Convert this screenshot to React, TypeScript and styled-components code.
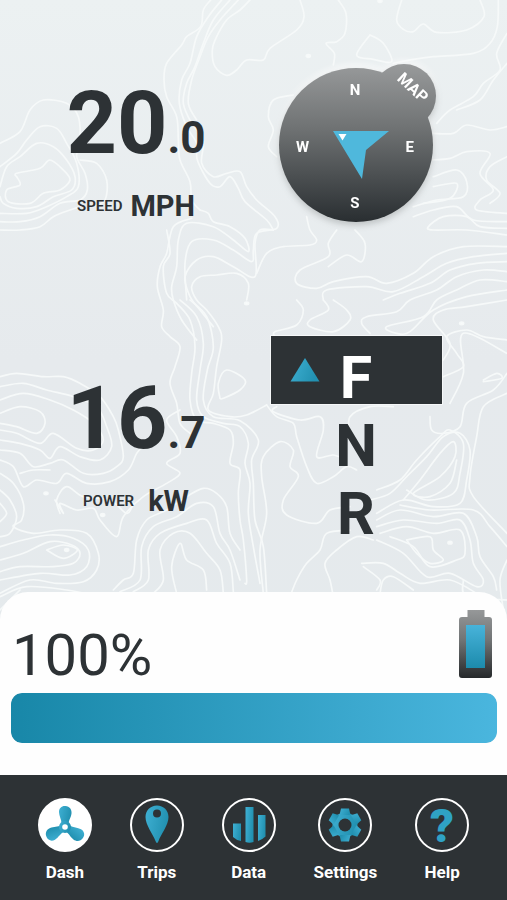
import React from "react";
import styled, { createGlobalStyle } from "styled-components";

const ink = "#2d3235";
const white = "#ffffff";

const GlobalStyle = createGlobalStyle`
  *, *::before, *::after { box-sizing: border-box; }
  body {
    margin: 0;
    background: ${ink};
    font-family: Roboto, "Liberation Sans", sans-serif;
    color: ${ink};
  }
`;

const Page = styled.div`
  position: relative;
  isolation: isolate;
  display: flex;
  flex-direction: column;
  min-height: 100vh;
  background: linear-gradient(#ecf1f2 0, #e6eaed 40%, #e4eaec 100%);
`;

const Terrain = styled.svg`
  position: absolute;
  inset: 0;
  width: 100%;
  height: 100%;
  z-index: -1;
  fill: none;
  stroke: #f6f9f9;
  stroke-width: 5;
  stroke-linejoin: round;
  stroke-linecap: round;
`;

const Main = styled.main`
  flex: 1;
  display: grid;
  grid-template-columns: 1fr 1fr;
  padding: 0 41px 51px 26px;
`;

const Readings = styled.section`
  display: flex;
  flex-direction: column;
  align-items: center;
  gap: 152px;
  padding-top: 79px;
`;

const Controls = styled.section`
  display: flex;
  flex-direction: column;
  align-items: center;
  gap: 114px;
  padding-top: 68px;
`;

const Metric = styled.div`
  display: flex;
  flex-direction: column;
  align-items: center;
  gap: 23px;
`;

const MetricValue = styled.div`
  font-size: 88px;
  line-height: 88px;
  font-weight: 700;
  white-space: nowrap;
`;

const Decimal = styled.span`
  font-size: 44px;
  line-height: 44px;
`;

const MetricCaption = styled.div<{ $gap: number }>`
  display: flex;
  align-items: center;
  gap: ${(p) => p.$gap}px;
`;

const MetricName = styled.span`
  font-size: 15px;
  line-height: 16px;
  font-weight: 600;
  text-transform: uppercase;
`;

const MetricUnit = styled.span`
  font-size: 29px;
  line-height: 32px;
  font-weight: 700;
`;

const Compass = styled.div`
  position: relative;
  width: 154px;
  height: 154px;
  color: ${white};
  filter: drop-shadow(0 3px 3px rgba(45, 50, 53, 0.25)) drop-shadow(0 -3px 3px rgba(255, 255, 255, 0.8));
`;

const CompassFace = styled.svg`
  display: block;
  width: 100%;
  height: 100%;
  overflow: visible;
`;

const Bearings = styled.div`
  position: absolute;
  inset: 13px 19px 10px 17px;
  display: grid;
  grid-template: "w n e" 1fr "w s e" 1fr / 1fr 1fr 1fr;
  font-size: 15px;
  line-height: 18px;
  font-weight: 700;
`;

const Bearing = styled.span<{ $area: "n" | "e" | "s" | "w" }>`
  grid-area: ${(p) => p.$area};
  align-self: ${(p) => ({ n: "start", s: "end", e: "center", w: "center" })[p.$area]};
  justify-self: ${(p) => ({ n: "center", s: "center", e: "end", w: "start" })[p.$area]};
`;

const MapButton = styled.button`
  position: absolute;
  top: -4px;
  right: -4px;
  width: 64px;
  height: 64px;
  padding: 0 0 22px;
  border: 0;
  border-radius: 50%;
  background: none;
  color: ${white};
  font: 700 16px/18px Roboto, "Liberation Sans", sans-serif;
  transform: rotate(43deg);
  cursor: pointer;
`;

const GearSelector = styled.fieldset`
  width: 171px;
  margin: 0;
  padding: 0;
  border: 0;
`;

const GearOption = styled.label<{ $active: boolean }>`
  display: grid;
  grid-template-columns: 1fr auto 1fr;
  height: 68px;
  padding-top: 16px;
  font-size: 59px;
  line-height: 52px;
  font-weight: 700;
  color: ${(p) => (p.$active ? white : ink)};
  background: ${(p) => (p.$active ? ink : "transparent")};
  box-shadow: ${(p) => (p.$active ? "0 0 0 1px rgba(255, 255, 255, 0.6)" : "none")};
  cursor: pointer;
`;

const GearMarker = styled.svg`
  width: 30px;
  height: 25px;
  margin-top: 5px;
  justify-self: center;
`;

const GearLetter = styled.span`
  grid-column: 2;
`;

const HiddenRadio = styled.input`
  position: absolute;
  opacity: 0;
  pointer-events: none;
`;

const BatteryPanel = styled.section`
  padding: 18px 10px 32px 11px;
  border-radius: 28px 28px 0 0;
  background: #fefefe;
`;

const BatteryHeader = styled.div`
  display: flex;
  justify-content: space-between;
  align-items: flex-start;
  padding: 0 5px 0 1px;
`;

const BatteryPercent = styled.div`
  padding-top: 11px;
  font-size: 58px;
  line-height: 69px;
`;

const BatteryIcon = styled.svg`
  width: 33px;
  height: 68px;
`;

const BarTrack = styled.div`
  height: 50px;
  margin-top: 3px;
  border-radius: 11px;
  background: #e6eaed;
  overflow: hidden;
`;

const BarFill = styled.div`
  height: 100%;
  border-radius: 11px;
  background: linear-gradient(90deg, #1887a8, #4ab6de);
`;

const Nav = styled.nav`
  display: flex;
  justify-content: space-evenly;
  height: 125px;
  padding-top: 23px;
  background: ${ink};
`;

const NavLink = styled.a`
  display: flex;
  flex-direction: column;
  align-items: center;
  gap: 9px;
  min-width: 54px;
  color: ${white};
  text-decoration: none;
  font-size: 17px;
  line-height: 22px;
  font-weight: 700;
`;

const NavBadge = styled.span<{ $active: boolean }>`
  display: block;
  width: 54px;
  height: 54px;
  border: 2px solid ${white};
  border-radius: 50%;
  background: ${(p) => (p.$active ? white : "transparent")};
`;

const NavIcon = styled.svg`
  display: block;
  width: 50px;
  height: 50px;
  overflow: visible;
  font: 900 47px Roboto, "Liberation Sans", sans-serif;
`;

const contours: string[] = [
  // ridge down the upper middle
  "632,0 610,30 602,80 560,110 545,135 500,190 492,240 500,290 530,350 535,420 540,480 570,545 575,600 600,630",
  "665,0 625,50 590,110 570,190 545,240 538,310 560,380 590,430 592,480 630,550 660,560 690,530 715,565 735,605 800,660 820,690",
  "690,0 640,60 610,130 585,200 560,250 550,310 575,370 610,420 605,490 640,530 680,520 720,515 740,560 770,600 825,650 830,685 770,700 760,750 755,785 700,750 640,720 575,725 555,790 560,900",
  "715,0 660,60 625,110 600,170 575,240 565,310 590,360",
  "750,0 720,30 680,60 650,110 637,150 645,200 680,226 710,210 740,180 790,180 810,145 890,90 912,50 900,0",
  "600,630 625,640 640,665 690,680 735,715 745,755 700,720 640,680 560,670 535,720 530,800 515,860 520,900 545,960 590,1020",
  "575,655 520,680 500,760 480,800 472,860 490,930 485,980 510,1010 540,1040 525,1100 510,1150 530,1210 540,1270 570,1300",
  "820,690 780,690 765,730 765,830 700,800 640,770 590,780 555,830 570,890 600,930 640,980",
  "740,900 745,850 710,820 650,825 600,830 575,860 590,900 620,930 655,980 665,1020 650,1100 640,1180 625,1230 690,1250 740,1245 800,1215",
  "500,690 510,760 490,800 500,880 530,910 570,960 585,1040 575,1120 570,1200 590,1260 640,1270 690,1290 700,1330 690,1390 720,1410 715,1480 720,1560 730,1620 740,1740 735,1750",
  "540,900 590,950 610,1030 600,1110 590,1200 610,1250 670,1270 720,1280 745,1330 735,1390 750,1450 745,1540 760,1640 780,1750",
  "570,900 620,950 640,1040 622,1110 610,1200 640,1250 720,1262 775,1320 755,1380 760,1450 765,1560 790,1640 800,1780",
  // top right
  "1015,0 1038,40 1035,100 1010,125 978,130 1003,160 1000,195",
  "1205,0 1190,60 1210,88 1240,95 1270,72 1310,97 1400,90 1452,50 1440,0",
  "1495,0 1492,80 1470,130 1420,160 1300,170 1240,178 1180,190",
  "1521,100 1490,160 1500,210 1450,250 1420,290 1350,330 1310,370",
  "1521,190 1480,240 1440,300 1370,330",
  "1110,105 1070,165 1120,178 1175,185 1150,130 1110,105",
  "880,285 820,300 805,350 820,390 805,440 830,470",
  "1300,400 1360,400 1400,375 1470,390 1521,380",
  "1290,480 1350,475 1400,455 1470,460 1440,520 1480,570 1440,600 1430,630 1521,640",
  "1300,530 1370,510 1400,545 1390,590 1310,600 1240,620",
  "1521,470 1470,500 1460,540 1500,580 1470,610",
  "1240,650 1300,630 1370,620 1420,660 1521,665",
  "1270,610 1350,595 1370,550 1300,560",
  "1521,685 1440,680 1400,650 1330,650 1285,680 1300,690 1400,690 1521,705",
  // below the compass
  "920,650 930,690 950,720 930,735 850,740 800,760 770,820",
  "1010,690 985,730 985,770 900,810 890,850 950,865 1000,845 1100,830 1160,850 1240,820 1300,770 1390,740 1521,740",
  "1065,690 1095,730 1085,785 1040,765 985,800",
  "970,900 980,870 1100,860 1180,875 1270,830 1340,790 1420,770 1521,760",
  "1150,900 1200,880 1290,850 1350,810 1430,790 1521,785",
  "1521,815 1450,810 1370,830 1310,870 1230,900 1190,935 1100,950 1085,970 1110,1000",
  "1521,845 1440,840 1370,870 1310,900 1270,950 1160,980 1190,1000 1230,995 1300,930 1400,890 1521,870",
  "890,900 910,930 890,975 825,995 825,1010",
  "970,900 985,930 930,960 930,980 1000,995 1050,960 1040,930 1000,900",
  // left hill
  "0,430 60,395 90,330 130,300 200,310 235,350 240,420 230,470 255,520 262,570 240,600 180,610 120,650 60,665 0,665",
  "0,500 50,460 80,420 120,380 170,385 200,430 230,490 235,560 200,590 140,620 80,640 0,640",
  "0,560 20,500 60,470 110,430 160,440 200,480 225,530 215,570 160,590 110,620 50,625 10,610 0,590",
  "50,530 60,555 20,570 25,605 90,610 130,580 180,570 210,540 190,510 150,480 120,505 50,520 50,530",
  "0,690 60,690 120,680 160,650 210,630 240,620",
  "240,480 290,490 320,540 315,600 280,620",
  // left lower slopes
  "0,1130 50,1120 130,1130 190,1130 240,1150 300,1190 340,1250 355,1290 370,1370 350,1400 310,1420 250,1420 190,1380 150,1390 100,1400 60,1360 0,1350",
  "0,1160 70,1150 140,1170 220,1190 290,1220 320,1280 335,1340 300,1380 240,1370 180,1340 150,1375 120,1350 60,1330 0,1320",
  "0,1200 70,1180 150,1200 220,1230 280,1270 310,1320 280,1350 230,1345 160,1300 120,1330 50,1300 0,1290",
  "0,1240 60,1220 120,1235 135,1270 110,1300 50,1280 0,1270",
  "0,1380 40,1400 70,1460 110,1440 170,1450 200,1420 260,1450 330,1445 385,1410 410,1360 430,1340",
  "0,1420 40,1450 70,1510 65,1560 40,1580 100,1600 180,1590 260,1600 295,1660 290,1710 250,1745 170,1750 90,1740 0,1780",
  "0,1470 30,1500 50,1550 30,1600 0,1610",
  "0,1510 20,1540 0,1565",
  "60,1420 100,1410 150,1410",
  "0,1640 70,1620 150,1605 220,1615 265,1650 260,1700 210,1725 120,1720 0,1740",
  "0,1680 70,1660 150,1625 215,1635 240,1660 220,1690 160,1700 60,1700 0,1715",
  "140,1650 190,1635 232,1650 190,1675 140,1650",
  "165,1500 190,1540 180,1510 230,1530 280,1525 300,1560 350,1610 370,1550 430,1490 500,1450 540,1420 500,1390 540,1360 530,1310 500,1260 540,1230",
  "180,1540 170,1500 200,1460 250,1490 330,1500 380,1540 400,1510",
  // lower middle
  "340,1770 370,1740 400,1720 410,1620 440,1560 500,1530 560,1490 610,1465 650,1480 680,1520 690,1600 720,1650",
  "360,1775 420,1740 425,1640 460,1580 530,1550 590,1510 640,1520 660,1600 690,1650 720,1740",
  "400,1775 445,1740 445,1650 480,1600 560,1570 620,1560 650,1630 690,1690 700,1775",
  "460,1780 490,1740 480,1650 520,1600 570,1600 620,1660 660,1710 670,1780",
  "530,1780 515,1700 540,1630 560,1680 610,1710 620,1770",
  // centre valley
  "800,1215 830,1250 880,1270 890,1310 920,1400 950,1450 1000,1430 1040,1400 1070,1410",
  "830,1220 820,1235 900,1260 960,1250 970,1290 950,1370 1000,1365 1040,1380",
  "790,1780 780,1650 800,1540 785,1430 790,1370 840,1325 880,1350 870,1400 895,1430 850,1500 860,1545 950,1570 990,1530 1050,1520",
  "870,1790 890,1740 920,1690 960,1650 980,1600 1050,1590",
  "1000,1790 990,1740 975,1690 1010,1650 1070,1610 1120,1620",
  "660,1195 655,1150 680,1110 735,1140 720,1170 670,1195 660,1195",
  "1050,1300 1050,1250 1110,1220 1180,1220",
  // right valley
  "1330,1080 1350,1030 1300,960 1330,930 1400,920 1521,900",
  "1521,1020 1450,1010 1400,990 1340,1010 1370,1060 1390,1100 1330,1130",
  "1521,1120 1480,1170 1400,1210 1380,1280 1330,1300 1295,1290 1290,1250",
  "1521,1060 1390,1000 1390,1120 1350,1210",
  "1110,1500 1170,1480 1220,1430 1280,1370 1330,1310 1380,1300 1410,1350 1400,1440 1380,1510 1300,1520 1210,1500 1130,1540",
  "1130,1470 1200,1440 1250,1380 1320,1310 1350,1290 1390,1330 1380,1420 1360,1480 1280,1500 1220,1470",
  "1210,1500 1260,1440 1320,1360 1360,1325 1365,1370 1320,1430 1240,1480 1290,1490 1350,1450 1370,1380",
  "1521,1180 1450,1220 1430,1310 1410,1430 1420,1490 1521,1600",
  "1130,1560 1200,1530 1300,1550 1390,1540 1430,1610 1440,1670 1480,1730 1490,1770",
  "1130,1580 1210,1560 1310,1570 1380,1560 1410,1620 1420,1690 1450,1740 1430,1760 1350,1720 1280,1730 1210,1660 1130,1620",
  "1140,1600 1220,1580 1300,1600 1380,1590 1395,1660 1370,1680 1290,1700 1240,1640 1170,1610",
  "1220,1620 1290,1610 1300,1650 1330,1680 1290,1690 1250,1660 1220,1620",
  "1521,1640 1470,1580 1420,1530 1290,1530 1200,1515",
  "1085,1690 1150,1690 1200,1720 1260,1750 1350,1740 1430,1780",
  "1140,1780 1150,1740 1180,1730 1240,1770",
  "1090,1700 1140,1740 1130,1770",
  "1450,1140 1490,1120 1505,1135 1450,1145",
  // beneath the panel corners
  "0,1790 80,1760 200,1770 300,1790",
  "1390,1740 1400,1790 1521,1800",
  "1521,1680 1500,1740 1510,1830",
  "0,1830 40,1790 60,1770",
];

const islets = [
  [925, 168],
  [1140, 3],
  [740, 910],
  [1385, 970],
  [138, 1480],
  [308, 1545],
  [200, 1650],
  [1350, 1628],
];

function smooth(points: string): string {
  const p = points.split(" ").map((s) => s.split(",").map(Number));
  let d = `M${p[0][0]},${p[0][1]}`;
  for (let i = 0; i < p.length - 1; i++) {
    const a = p[Math.max(i - 1, 0)];
    const b = p[i];
    const c = p[i + 1];
    const e = p[Math.min(i + 2, p.length - 1)];
    d += `C${b[0] + (c[0] - a[0]) / 6},${b[1] + (c[1] - a[1]) / 6} ${c[0] - (e[0] - b[0]) / 6},${c[1] - (e[1] - b[1]) / 6} ${c[0]},${c[1]}`;
  }
  return d;
}

const teal = "url(#teal)";

const icons: Record<string, React.ReactNode> = {
  Dash: (
    <>
      <g fill={teal}>
        {[0, 120, 240].map((a) => (
          <path
            key={a}
            transform={`rotate(${a} 25 27)`}
            d="M21.500 24C21.500 19 19 16 19 12C19 8 22 5.500 25.500 6C29.500 6.300 32 9.500 31.500 13.500C31 18 28.500 20 28.500 25Z"
          />
        ))}
        <circle cx="25" cy="27" r="6" />
      </g>
      <circle cx="25" cy="27" r="2.800" fill={white} />
    </>
  ),
  Trips: (
    <path
      fill={teal}
      fillRule="evenodd"
      d="M25 5.500C18.500 5.500 13.500 10.500 13.500 17C13.500 25 21 34 23.500 41Q25 45 26.500 41C29 34 36.500 25 36.500 17C36.500 10.500 31.500 5.500 25 5.500ZM25 9.500A4 4 0 1 1 25 17.500A4 4 0 1 1 25 9.500Z"
    />
  ),
  Data: (
    <g fill={teal}>
      <path d="M9 23.500h8v17.500q-5-1-8-4Z" />
      <path d="M21.500 7h8v35q-4 1.500-8 0Z" />
      <path d="M34 15h7.500v21.500q-3 3-7.500 4.500Z" />
    </g>
  ),
  Settings: (
    <>
      <mask id="gearHole">
        <rect width="50" height="50" fill={white} />
        <circle cx="25" cy="25" r="6.500" fill="#000" />
      </mask>
      <g fill={teal} mask="url(#gearHole)">
        <circle cx="25" cy="25" r="12.500" />
        {[0, 60, 120, 180, 240, 300].map((a) => (
          <path key={a} transform={`rotate(${a} 25 25)`} d="M19.500 15L21 8.500h8L30.500 15Z" />
        ))}
      </g>
    </>
  ),
  Help: (
    <text x="25" y="42" textAnchor="middle" fill="#2fa2c5">
      ?
    </text>
  ),
};

const navItems = ["Dash", "Trips", "Data", "Settings", "Help"];
const gears = ["F", "N", "R"];
const charge = 100;

export default function App() {
  const [gear, setGear] = React.useState("F");
  const [tab, setTab] = React.useState("Dash");

  return (
    <Page>
      <GlobalStyle />
      <Terrain viewBox="0 0 1521 2700" preserveAspectRatio="xMidYMin slice" aria-hidden="true">
        <defs>
          <linearGradient id="teal" x1="0" y1="0" x2="1" y2="0.3">
            <stop offset="0" stopColor="#3fb0d3" />
            <stop offset="1" stopColor="#2291b1" />
          </linearGradient>
        </defs>
        {contours.map((c) => (
          <path key={c} d={smooth(c)} />
        ))}
        {islets.map(([x, y]) => (
          <ellipse key={`${x}-${y}`} cx={x} cy={y} rx="6" ry="4" fill="#f8fbfb" />
        ))}
      </Terrain>

      <Main>
        <Readings>
          <Metric>
            <MetricValue>
              20<Decimal>.0</Decimal>
            </MetricValue>
            <MetricCaption $gap={8}>
              <MetricName>Speed</MetricName>
              <MetricUnit>MPH</MetricUnit>
            </MetricCaption>
          </Metric>
          <Metric>
            <MetricValue>
              16<Decimal>.7</Decimal>
            </MetricValue>
            <MetricCaption $gap={14}>
              <MetricName>Power</MetricName>
              <MetricUnit>kW</MetricUnit>
            </MetricCaption>
          </Metric>
        </Readings>

        <Controls>
          <Compass>
            <CompassFace viewBox="0 0 154 154" aria-hidden="true">
              <defs>
                <linearGradient id="dial" gradientUnits="userSpaceOnUse" x1="0" y1="-4" x2="0" y2="154">
                  <stop offset="0" stopColor="#989a9b" />
                  <stop offset="0.4" stopColor="#707374" />
                  <stop offset="1" stopColor="#292e31" />
                </linearGradient>
              </defs>
              <circle cx="77" cy="77" r="77" fill="url(#dial)" />
              <circle cx="125" cy="28" r="32" fill="url(#dial)" />
              <path d="M54 63H110L87 82L83 111Z" fill="#4fb8dc" />
              <path d="M59.500 66H67.500L63.500 72.500Z" fill={white} />
            </CompassFace>
            <Bearings>
              <Bearing $area="n">N</Bearing>
              <Bearing $area="e">E</Bearing>
              <Bearing $area="s">S</Bearing>
              <Bearing $area="w">W</Bearing>
            </Bearings>
            <MapButton type="button">MAP</MapButton>
          </Compass>

          <GearSelector aria-label="Gear">
            {gears.map((g) => (
              <GearOption key={g} $active={g === gear}>
                {g === gear && (
                  <GearMarker viewBox="0 0 30 25" aria-hidden="true">
                    <path d="M15 1L29.500 24.500H0.500Z" fill={teal} />
                  </GearMarker>
                )}
                <GearLetter>{g}</GearLetter>
                <HiddenRadio
                  type="radio"
                  name="gear"
                  value={g}
                  checked={g === gear}
                  onChange={() => setGear(g)}
                />
              </GearOption>
            ))}
          </GearSelector>
        </Controls>
      </Main>

      <BatteryPanel>
        <BatteryHeader>
          <BatteryPercent>{charge}%</BatteryPercent>
          <BatteryIcon viewBox="0 0 33 68" aria-hidden="true">
            <defs>
              <linearGradient id="shell" x1="0" y1="0" x2="0" y2="1">
                <stop offset="0" stopColor="#969899" />
                <stop offset="0.45" stopColor="#707374" />
                <stop offset="1" stopColor="#26292b" />
              </linearGradient>
              <linearGradient id="cell" x1="0" y1="0" x2="0" y2="1">
                <stop offset="0" stopColor="#48b3da" />
                <stop offset="1" stopColor="#1c8bac" />
              </linearGradient>
            </defs>
            <path
              d="M8.500 0H25.500V7H30Q33 7 33 10V65Q33 68 30 68H3Q0 68 0 65V10Q0 7 3 7H8.500Z"
              fill="url(#shell)"
            />
            <rect x="7" y="15" width="19" height="43" fill="url(#cell)" />
          </BatteryIcon>
        </BatteryHeader>
        <BarTrack role="progressbar" aria-label="Battery" aria-valuenow={charge} aria-valuemin={0} aria-valuemax={100}>
          <BarFill style={{ width: `${charge}%` }} />
        </BarTrack>
      </BatteryPanel>

      <Nav>
        {navItems.map((name) => (
          <NavLink key={name} href={`#${name.toLowerCase()}`} onClick={() => setTab(name)}>
            <NavBadge $active={name === tab}>
              <NavIcon viewBox="0 0 50 50" aria-hidden="true">
                {icons[name]}
              </NavIcon>
            </NavBadge>
            {name}
          </NavLink>
        ))}
      </Nav>
    </Page>
  );
}
